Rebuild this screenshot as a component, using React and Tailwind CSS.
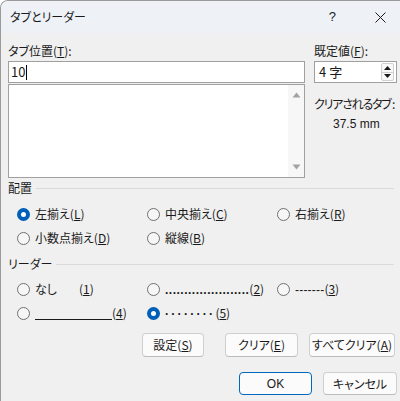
import React from 'react';

const font = "font-['Noto_Sans_CJK_JP','Noto_Sans',sans-serif] [font-feature-settings:'palt']";

function Radio({ checked, children }) {
  return (
    <div className="flex items-center h-6">
      {checked ? (
        <span className="w-[13px] h-[13px] rounded-full bg-[#005fb8] flex items-center justify-center shrink-0">
          <span className="w-[5px] h-[5px] rounded-full bg-white" />
        </span>
      ) : (
        <span className="w-[13px] h-[13px] rounded-full border border-[#707070] bg-[#f6f6f6] shrink-0" />
      )}
      <span className="ml-[5px] whitespace-nowrap">{children}</span>
    </div>
  );
}

function GroupHeader({ children }) {
  return (
    <div className="flex items-center h-4">
      <span>{children}</span>
      <div className="flex-1 h-px bg-[#dadada] ml-1 mr-1" />
    </div>
  );
}

function Btn({ width, primary, children }) {
  return (
    <div
      className={
        (primary ? 'border-[#0067c0] ' : 'border-[#cfcfcf] border-b-[#bcbcbc] ') +
        'border rounded-[4px] bg-[#fbfbfb] flex items-center justify-center ' +
        width
      }
    >
      {children}
    </div>
  );
}

function Tri({ up, color }) {
  return (
    <svg width="9" height="6" viewBox="0 0 9 6">
      {up ? <path d="M4.5 0.5 L8.5 5.5 L0.5 5.5 Z" fill={color} /> : <path d="M0.5 0.5 L8.5 0.5 L4.5 5.5 Z" fill={color} />}
    </svg>
  );
}

const U = ({ children }) => <u className="underline-offset-1">{children}</u>;

export default function App() {
  return (
    <div className={'w-[400px] h-[401px] overflow-hidden bg-white text-[12px] text-[#1a1a1a] ' + font}>
      <div className="w-[420px] h-[420px] border-l border-t border-[#9a9a9a] rounded-tl-lg overflow-hidden bg-[#f0f0f0]">
        {/* title bar */}
        <div className="h-8 bg-[#eef2f7] flex items-center">
          <span className="ml-[9px] text-[12px]">タブとリーダー</span>
          <span className="ml-auto mr-[39px] text-[13px] font-['Liberation_Sans',sans-serif]">?</span>
          <svg width="11" height="11" viewBox="0 0 11 11" className="mr-[34px]">
            <path d="M0.5 0.5 L10.5 10.5 M10.5 0.5 L0.5 10.5" stroke="#1a1a1a" strokeWidth="1" />
          </svg>
        </div>

        <div className="pl-[7px] w-[397px] pt-2">
          {/* top row */}
          <div className="flex">
            <div className="w-[297px]">
              <div className="h-5 leading-5">
                タブ位置(<U>T</U>):
              </div>
              <div className="h-[22px] bg-white border border-[#a0a0a0] flex items-center pl-[2px] text-[13px]">
                <span>10</span>
                <span className="w-px h-[15px] bg-black ml-px" />
              </div>
              <div className="mt-px h-[94px] bg-white border border-[#a0a0a0] flex">
                <div className="flex-1" />
                <div className="w-[16px] bg-[#f7f7f7] flex flex-col items-center justify-between py-[7px]">
                  <Tri up color="#a3a3a3" />
                  <Tri color="#a3a3a3" />
                </div>
              </div>
            </div>
            <div className="ml-[9px] w-[83px]">
              <div className="h-5 leading-5 whitespace-nowrap">
                既定値(<U>F</U>):
              </div>
              <div className="h-[22px] bg-white border border-[#a0a0a0] flex items-center pl-[4px] text-[13px]">
                <span>4 字</span>
                <div className="ml-auto mr-[2px] w-[13px] h-[18px] flex flex-col border border-[#d0d0d0] rounded-[2px] bg-[#f9f9f9]">
                  <div className="flex-1 flex items-center justify-center border-b border-[#d0d0d0]">
                    <svg width="7" height="4" viewBox="0 0 7 4"><path d="M3.5 0 L7 4 L0 4 Z" fill="#1a1a1a" /></svg>
                  </div>
                  <div className="flex-1 flex items-center justify-center">
                    <svg width="7" height="4" viewBox="0 0 7 4"><path d="M0 0 L7 0 L3.5 4 Z" fill="#1a1a1a" /></svg>
                  </div>
                </div>
              </div>
              <div className="mt-[13px] h-4 leading-4 whitespace-nowrap tracking-[-1.2px]">クリアされるタブ :</div>
              <div className="mt-1 h-4 leading-4 pl-[19px] font-['Liberation_Sans',sans-serif] text-[12px]">37.5 mm</div>
            </div>
          </div>

          {/* alignment */}
          <div className="mt-0.5">
            <GroupHeader>配置</GroupHeader>
          </div>
          <div className="mt-1.5 pl-[9px] grid grid-cols-[130px_130px_130px]">
            <Radio checked>左揃え(<U>L</U>)</Radio>
            <Radio>中央揃え(<U>C</U>)</Radio>
            <Radio>右揃え(<U>R</U>)</Radio>
            <Radio>小数点揃え(<U>D</U>)</Radio>
            <Radio>縦線(<U>B</U>)</Radio>
          </div>

          {/* leader */}
          <div className="mt-1.5">
            <GroupHeader>リーダー</GroupHeader>
          </div>
          <div className="mt-[5px] pl-[9px] grid grid-cols-[130px_130px_130px]">
            <Radio>
              <span className="inline-block w-[44px]">なし</span>(<U>1</U>)
            </Radio>
            <Radio>
              <span className="font-['Liberation_Sans',sans-serif] font-bold tracking-[0.5px]">......................</span>(<U>2</U>)
            </Radio>
            <Radio>
              <span className="font-['Liberation_Sans',sans-serif] tracking-[0.2px]">-------</span>(<U>3</U>)
            </Radio>
            <Radio>
              <span className="inline-block w-[77px] h-[11px] border-b border-[#1a1a1a] align-middle" />(<U>4</U>)
            </Radio>
            <Radio checked>
              <span className="font-['Liberation_Sans',sans-serif] font-bold tracking-[2.3px]">········</span>(<U>5</U>)
            </Radio>
          </div>

          {/* buttons */}
          <div className="mt-2 h-6 flex">
            <div className="ml-[134px]">
              <Btn width="w-[62px] h-6">設定(<U>S</U>)</Btn>
            </div>
            <div className="ml-[21px]">
              <Btn width="w-[73px] h-6">クリア(<U>E</U>)</Btn>
            </div>
            <div className="ml-[11px]">
              <Btn width="w-[86px] h-6">すべてクリア(<U>A</U>)</Btn>
            </div>
          </div>
          <div className="mt-[15px] h-[23px] flex">
            <div className="ml-[231px]">
              <Btn primary width="w-[73px] h-[23px]">
                <span className="font-['Liberation_Sans',sans-serif]">OK</span>
              </Btn>
            </div>
            <div className="ml-[11px]">
              <Btn width="w-[74px] h-[23px]">キャンセル</Btn>
            </div>
          </div>
        </div>
      </div>
    </div>
  );
}
